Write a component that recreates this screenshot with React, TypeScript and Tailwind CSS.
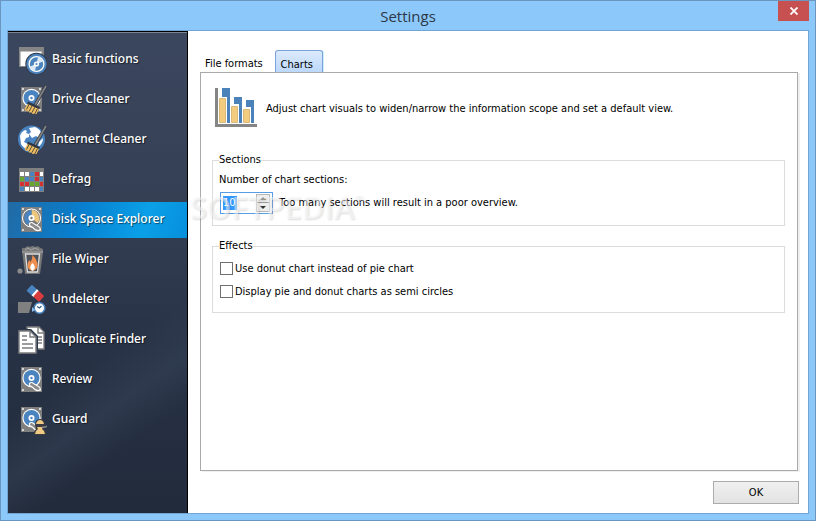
import { type ReactNode, useState } from 'react'

interface NavItem {
  label: string
  icon: ReactNode
}

function Svg({ children }: { children: ReactNode }) {
  return (
    <svg viewBox="0 0 30 30" className="size-[30px] shrink-0" aria-hidden="true">
      {children}
    </svg>
  )
}

function DriveBody() {
  return (
    <>
      <rect x="4" y="2" width="21" height="25" fill="#7f7f7f" />
      <circle cx="6" cy="4" r="0.9" fill="#fff" />
      <circle cx="23" cy="4" r="0.9" fill="#fff" />
      <circle cx="6" cy="25" r="0.9" fill="#fff" />
      <circle cx="23" cy="25" r="0.9" fill="#fff" />
      <circle cx="14.5" cy="13" r="9.2" fill="#fff" />
      <circle cx="14.5" cy="13" r="8" fill="#4a84c0" />
      <circle cx="14.5" cy="13" r="3" fill="#fff" />
      <circle cx="14.5" cy="13" r="1.2" fill="#4a84c0" />
    </>
  )
}

function DriveArm() {
  return (
    <path d="M12.5 18.5q2-2 4 0l6 3.600q2 3-1.500 3.500-3 0-5.500-3.400l-3-1.700z" fill="#8c8c8c" stroke="#fff" strokeWidth="1.1" />
  )
}

function Broom() {
  return (
    <>
      <path d="M29.500.5 18 20" stroke="#343b49" strokeWidth="3.4" />
      <path d="M29 1 18 20" stroke="#858585" strokeWidth="1.6" />
      <path d="m11 16.500 12 5.500-1 2.500-12-5z" fill="#2f3644" />
      <path d="m10.500 19 11.500 5-2.500 5-2.500-.5-1 .8-2-2-1.500.5-1.500-2-2 .2-1.500-2z" fill="#edbd62" />
      <path d="m12 19.500-2.500 5M15 21l-3 5.500M18 22l-3 5.500M20.500 23.500l-2.500 5" stroke="#4b4235" strokeWidth="0.9" />
    </>
  )
}

const navItems: NavItem[] = [
  {
    label: 'Basic functions',
    icon: (
      <Svg>
        <path d="M2 2h25v20H2z" fill="#858585" />
        <path d="M3.500 6.500h21V21h-21z" fill="#fff" />
        <circle cx="19.500" cy="19" r="11.200" fill="#333d50" />
        <circle cx="19.500" cy="19" r="10.200" fill="#4d84bd" />
        <circle cx="19.500" cy="19" r="7.400" fill="none" stroke="#fff" strokeWidth="1.300" />
        <path d="m19.500 19 1.500-7a7 7 0 0 1 5 4.500zM19.500 19l-1.500 7a7 7 0 0 1-5-4.500z" fill="#dce9f6" />
        <circle cx="19.500" cy="19" r="2.600" fill="#fff" />
        <circle cx="19.500" cy="19" r="1.100" fill="#4d84bd" />
      </Svg>
    ),
  },
  {
    label: 'Drive Cleaner',
    icon: (
      <Svg>
        <DriveBody />
        <Broom />
      </Svg>
    ),
  },
  {
    label: 'Internet Cleaner',
    icon: (
      <Svg>
        <circle cx="14.500" cy="14" r="13.500" fill="#4a84c0" />
        <path d="M3 11q1-4 5-6l2 1-1 2 3 1v3l-3 1-2 4 4 2-1 4 2 2q-6-2-8-6l-1-8zM12 3l6-1q5 2 7 7l-3 4-3-2-4 2-3-4 2-2zM22 17l4-4q0 6-5 9z" fill="#fff" />
        <Broom />
      </Svg>
    ),
  },
  {
    label: 'Defrag',
    icon: (
      <Svg>
        <path d="M2 3h25v24H2z" fill="#808080" />
        <path d="M3 7h4v4H3zM8 7h4v4H8zM23 7h3v4h-3zM18 12h4v4h-4zM8 22h4v4H8zM13 22h4v4h-4zM18 22h4v4h-4z" fill="#fff" />
        <path d="M13 7h4v4h-4zM13 12h4v4h-4zM8 12h4v4H8zM23 12h3v4h-3zM23 22h3v4h-3zM3 22h4v4H3z" fill="#4a84c0" />
        <path d="M18 7h4v4h-4zM18 12h4v4h-4zM3 17h4v4H3zM8 17h4v4H8zM23 17h3v4h-3z" fill="#d42f34" />
        <path d="M3 12h4v4H3zM13 17h4v4h-4zM18 17h4v4h-4z" fill="#69a62e" />
      </Svg>
    ),
  },
  {
    label: 'Disk Space Explorer',
    icon: (
      <Svg>
        <DriveBody />
        <circle cx="14.500" cy="13" r="9" fill="#777" stroke="#fff" />
        <path d="M14.500 13V5a8 8 0 0 1 6 13z" fill="#edc77d" />
        <path d="M14.500 13V5a8 8 0 0 0-3 15z" fill="#4a84c0" />
        <circle cx="14.500" cy="13" r="3" fill="#fff" />
        <circle cx="14.500" cy="13" r="1.200" fill="#777" />
        <DriveArm />
      </Svg>
    ),
  },
  {
    label: 'File Wiper',
    icon: (
      <Svg>
        <path d="M5 6q-1-4 3-3 2-3 5-1 3-2 5 0 4-2 5 1 4 0 3 4l-3 22H8z" fill="#777" />
        <path d="M5 7h21M8 5l3-2 3 2 4-2 4 2" fill="none" stroke="#a9a9a9" />
        <path d="M8.500 9h14l-2 18h-10z" fill="#4e5158" stroke="#ddd" strokeWidth="1.300" />
        <path d="M15.500 10q5 5 5 10 0 5-5 6-5-1-5-6 0-3 2-5l1 2q2-3 2-7z" fill="#ee8f50" />
        <path d="M15.500 18q3 3 2 6l-2 2-2-2q-1-3 2-6z" fill="#fff" />
        <circle cx="3" cy="26" r="2.600" fill="#8b8b8b" />
      </Svg>
    ),
  },
  {
    label: 'Undeleter',
    icon: (
      <Svg>
        <g transform="rotate(42 18 8)">
          <rect x="10" y="4" width="9" height="8" rx="1" fill="#4a84c0" />
          <rect x="17" y="4" width="3" height="8" fill="#fff" />
          <rect x="19" y="4" width="8" height="8" rx="1" fill="#d83c3e" />
        </g>
        <path d="M1 17h14l-3 11H1z" fill="#808080" />
        <circle cx="22.500" cy="23" r="5.300" fill="#fff" stroke="#4a84c0" strokeWidth="1.600" />
        <path d="M20 21.500 22.500 23l2-2" fill="none" stroke="#36618f" strokeWidth="1.200" />
        <path d="m15 22 3 3-3 2z" fill="#8bbdeb" />
      </Svg>
    ),
  },
  {
    label: 'Duplicate Finder',
    icon: (
      <Svg>
        <path d="M10 2h12l5 5v17H12z" fill="#fff" stroke="#7d7d7d" strokeWidth="1.400" />
        <path d="M21 2v6h6M21 12h4M21 15h4M21 18h4" fill="none" stroke="#7d7d7d" strokeWidth="1.400" />
        <path d="M1 4h13l7 7v18H1z" fill="#2d384b" />
        <path d="M2 6h11l6 6v16H2z" fill="#fff" stroke="#7d7d7d" strokeWidth="1.400" />
        <path d="M13 6v6h6M5 11h5M5 15h5M5 19h11M5 23h11" fill="none" stroke="#7d7d7d" strokeWidth="1.400" />
      </Svg>
    ),
  },
  {
    label: 'Review',
    icon: (
      <Svg>
        <DriveBody />
        <DriveArm />
      </Svg>
    ),
  },
  {
    label: 'Guard',
    icon: (
      <Svg>
        <DriveBody />
        <DriveArm />
        <path d="M18 20q0-6 5-6t5 6l-1 4 2 2v4H17v-3l2-3z" fill="#3a3a40" />
        <path d="M19 19q1-4 4-4t4 4zM20 22h6l-1 2q3 2 3 5h-10q0-3 3-5z" fill="#f0c983" />
        <path d="M25 22q3 1 5-1" fill="none" stroke="#888" strokeWidth="1.500" />
      </Svg>
    ),
  },
]

function Sidebar() {
  const [selected, setSelected] = useState('Disk Space Explorer')

  return (
    <nav className="w-[180px] shrink-0 overflow-hidden border-t border-r border-black bg-[linear-gradient(145deg,transparent_64%,#35425788_74%,transparent_82%),linear-gradient(to_bottom,#3b475e,#343f54_38%,#273246_65%,#222b3b)]">
      <ul className="flex flex-col gap-1 border-t border-[#7c8391] pt-[9px]">
        {navItems.map(({ label, icon }) => (
          <li key={label}>
            <button
              type="button"
              onClick={() => setSelected(label)}
              className={`flex h-9 w-full items-center gap-[5px] pl-[9px] text-left font-[Noto_Sans,sans-serif] text-[12px] font-medium whitespace-nowrap text-white [text-shadow:1px_1px_1px_#0008] ${
                selected === label ? 'bg-[linear-gradient(110deg,#226aa4,#087fce_40%,#0aa0e8_75%,#078fdc)]' : ''
              }`}
            >
              {icon}
              <span className="pb-0.5">{label}</span>
            </button>
          </li>
        ))}
      </ul>
    </nav>
  )
}

function ChartIcon() {
  return (
    <svg viewBox="0 0 44 42" className="h-[42px] w-11 shrink-0" aria-hidden="true">
      <path d="M1 1h3v36h39v3H1z" fill="#858585" />
      <path d="M8 1h8v35H8zM20 10h8v26h-8zM32 13h8v23h-8z" fill="#4b82b9" />
      <path d="M4 10h9v26H4zM16 17h9v19h-9zM28 20h9v16h-9z" fill="#fff" />
      <path d="M5.500 11.500h6v24h-6zM17.500 19.500h6v16h-6zM29.500 22.500h6v13h-6z" fill="#f3cc7f" stroke="#d9b878" />
    </svg>
  )
}

function Spinner() {
  const [value, setValue] = useState(10)

  return (
    <div className="flex h-[22px] w-[53px] items-center justify-between border border-[#569de5] bg-white px-0.5">
      <input
        id="sections"
        type="text"
        inputMode="numeric"
        value={value}
        onChange={(e) => setValue(Number(e.target.value) || 0)}
        className="h-[14px] w-[14px] bg-[#3399ff] text-[11px] text-white outline-none"
      />
      <div className="flex w-[14px] flex-col border border-[#b8b8b8] bg-[#eeeeee]">
        <button type="button" aria-label="Increase" onClick={() => setValue(value + 1)} className="flex h-2 items-center justify-center border-b border-[#999]">
          <svg viewBox="0 0 6 3" className="h-[3px] w-1.5"><path d="m0 3 3-3 3 3z" fill="#333" /></svg>
        </button>
        <button type="button" aria-label="Decrease" onClick={() => setValue(value - 1)} className="flex h-2 items-center justify-center">
          <svg viewBox="0 0 6 3" className="h-[3px] w-1.5"><path d="m0 0 3 3 3-3z" fill="#333" /></svg>
        </button>
      </div>
    </div>
  )
}

function CheckRow({ label }: { label: string }) {
  return (
    <label className="flex h-[15px] items-center gap-0.5">
      <input type="checkbox" className="size-[13px] appearance-none border border-[#707070] bg-white checked:bg-[#3399ff]" />
      {label}
    </label>
  )
}

function ChartsPanel() {
  return (
    <section role="tabpanel" className="mr-px flex-1 border border-[#a9a9a9] px-[11px] pt-[14px] shadow-[2px_1px_0_#f0f0f0]">
      <div className="flex items-center gap-2 pl-0.5">
        <ChartIcon />
        <p className="pt-0.5">Adjust chart visuals to widen/narrow the information scope and set a default view.</p>
      </div>

      <fieldset className="mt-6 mr-px h-[73px] border border-[#dcdcdc] px-1.5">
        <legend className="h-[14px] leading-[14px]">Sections</legend>
        <label htmlFor="sections" className="mt-[5px] block">Number of chart sections:</label>
        <div className="mt-1 ml-px flex items-center gap-1.5">
          <Spinner />
          <span>Too many sections will result in a poor overview.</span>
        </div>
      </fieldset>

      <fieldset className="mt-[13px] mr-px h-[74px] border border-[#dcdcdc] px-[7px]">
        <legend className="-ml-px h-[14px] leading-[14px]">Effects</legend>
        <div className="mt-2 flex flex-col gap-2">
          <CheckRow label="Use donut chart instead of pie chart" />
          <CheckRow label="Display pie and donut charts as semi circles" />
        </div>
      </fieldset>
    </section>
  )
}

export default function App() {
  return (
    <div className="flex min-h-screen flex-col border border-[#6a96bf] bg-[#8dc8fb] px-1.5 pb-1.5 font-[DejaVu_Sans_Condensed,sans-serif] text-[11px] leading-4 text-black">
      <header className="relative flex h-[29px] items-center justify-center">
        <h1 className="font-[Open_Sans,sans-serif] text-[15px] text-[#2c3845]">Settings</h1>
        <button type="button" aria-label="Close" className="absolute top-0 right-0 flex h-5 w-[31px] items-center justify-center bg-[#c75050]">
          <svg viewBox="0 0 8 8" className="size-2">
            <path d="m.5.5 7 7m0-7-7 7" stroke="#fff" strokeWidth="1.800" />
          </svg>
        </button>
      </header>

      <div className="flex flex-1 border border-[#70a5d6] bg-white">
        <Sidebar />
        <main className="relative flex min-w-0 flex-1 flex-col pt-[19px] pr-[9px] pb-[9px] pl-3">
          <div role="tablist" className="flex h-[22px] gap-[7px]">
            <button type="button" role="tab" aria-selected="false" className="px-[5px] pt-1.5">File formats</button>
            <button
              type="button"
              role="tab"
              aria-selected="true"
              className="w-12 rounded-t-[3px] border border-b-0 border-[#7ba2d8] bg-linear-to-b from-[#dceafc] to-[#bcd8fb] pt-1.5 pr-1 shadow-[1px_0_0_#c9efff]"
            >
              Charts
            </button>
          </div>
          <ChartsPanel />
          <button type="button" className="mt-2.5 h-[23px] w-[86px] self-end border border-[#acacac] bg-linear-to-b from-[#f0f0f0] to-[#e3e3e3]">
            OK
          </button>
          <div aria-hidden="true" className="pointer-events-none absolute top-[156px] left-0.5 flex items-start font-[Open_Sans,sans-serif] text-[31px] leading-10 font-semibold text-white/50 [text-shadow:1px_1px_2px_#0002]">
            SOFTPEDIA
            <span className="text-[11px] leading-6">®</span>
          </div>
        </main>
      </div>
    </div>
  )
}
